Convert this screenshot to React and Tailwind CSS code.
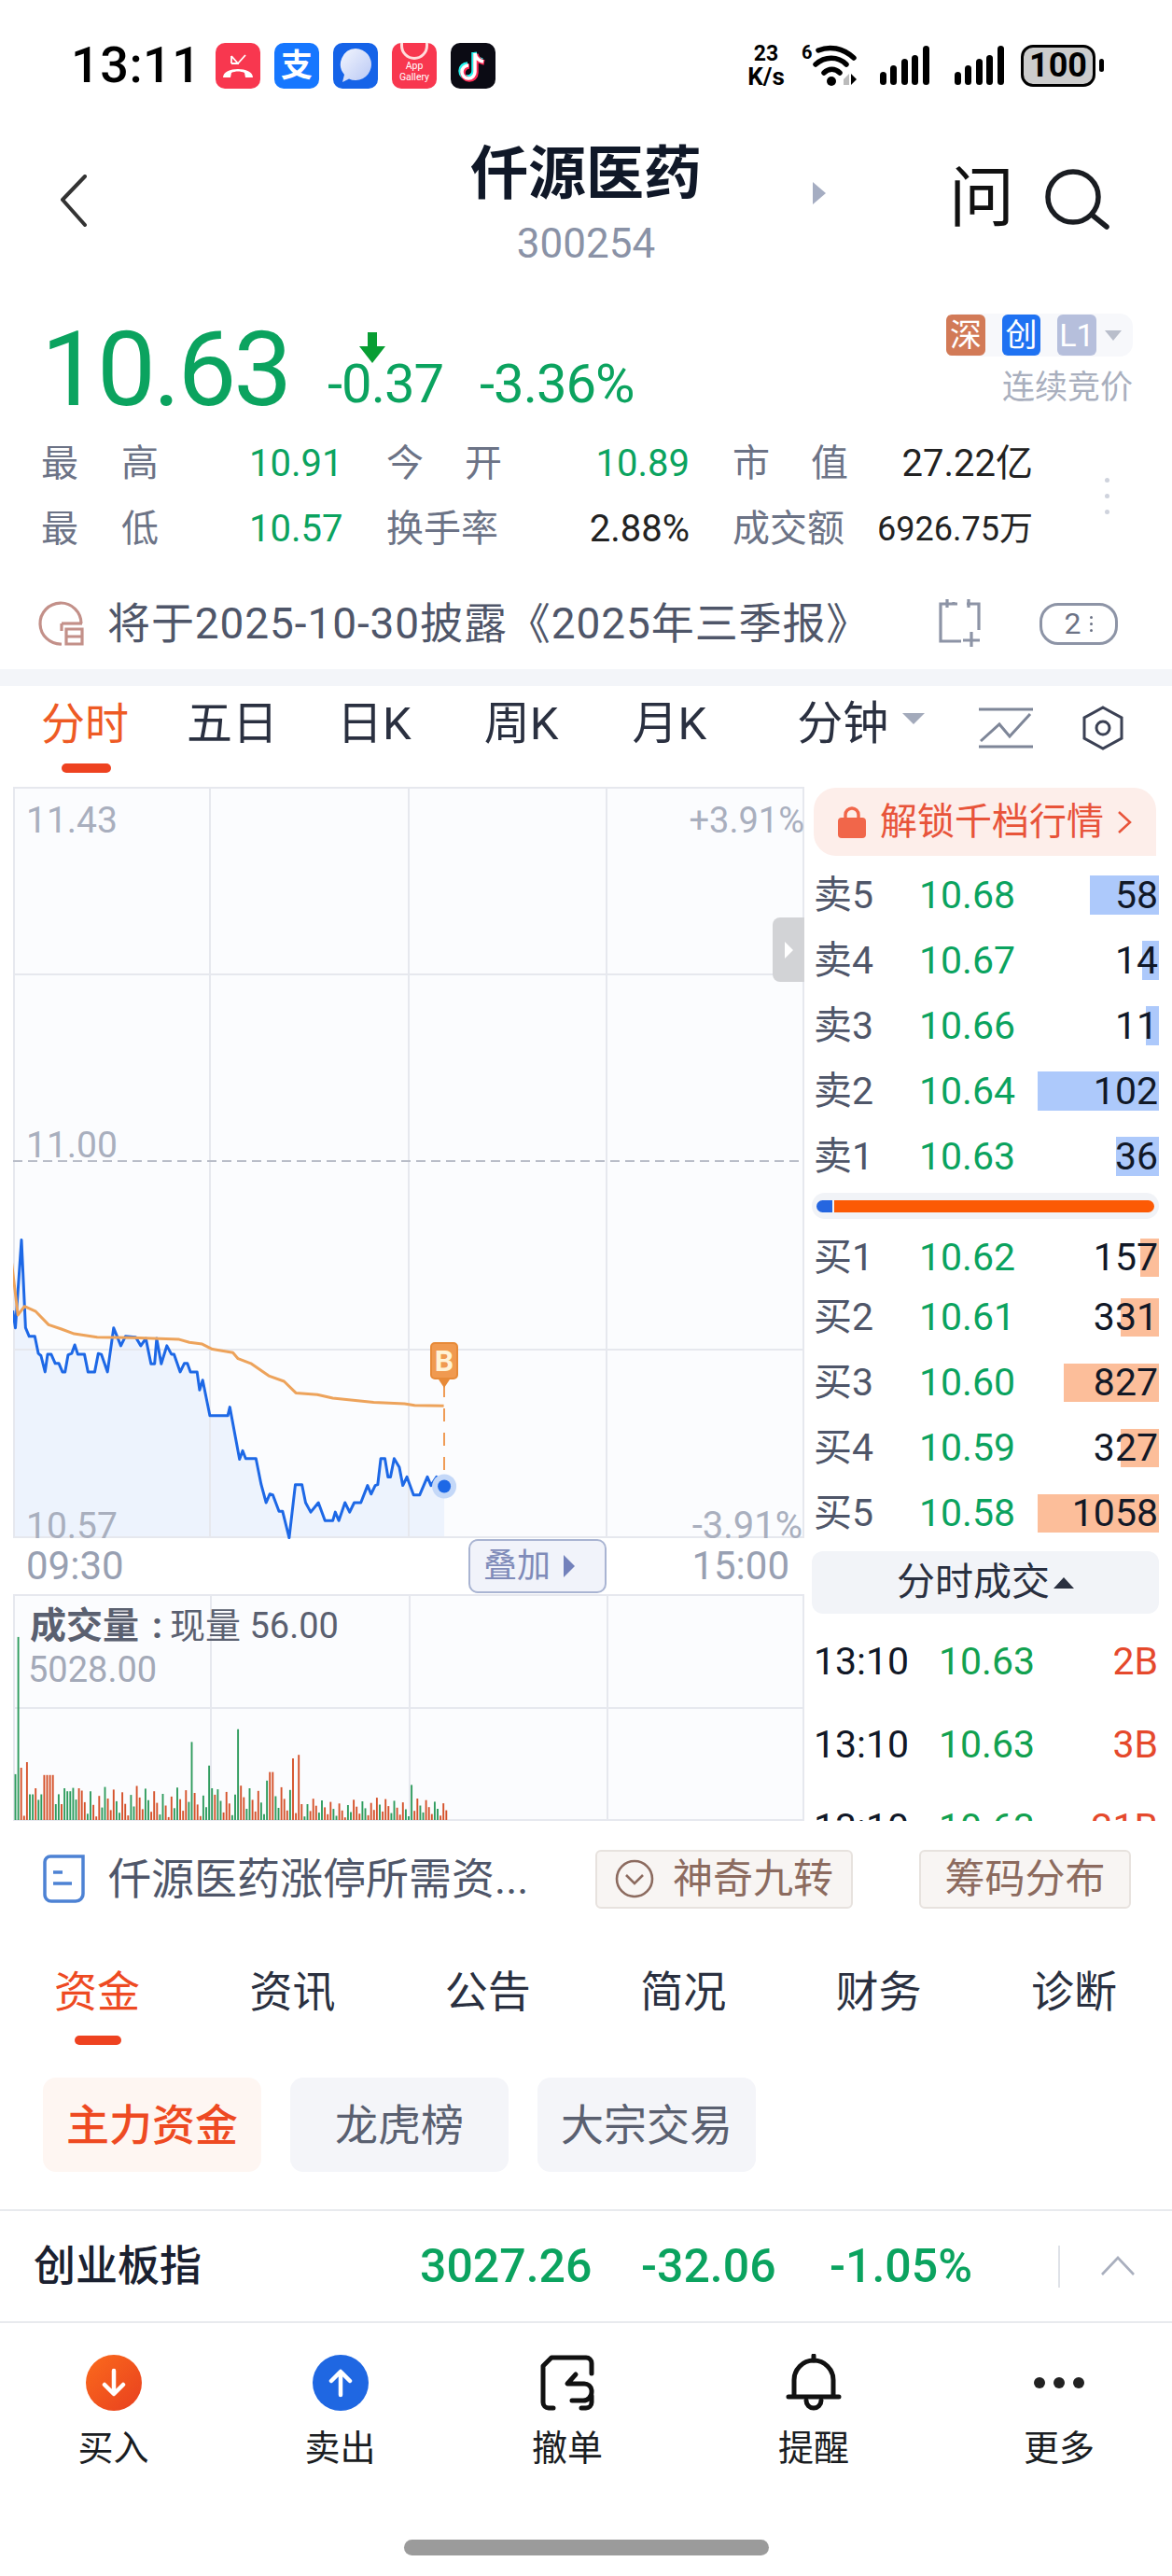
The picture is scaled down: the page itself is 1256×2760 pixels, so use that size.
import React from "react";

const SANS = { fontFamily: 'Roboto, "Noto Sans CJK SC", sans-serif' };
const GREEN = "#0ba35f";

const bluePts = [[25,360],[30,400],[42,195],[50,400],[57,420],[68,420],[75,460],[80,465],[88,503],[93,462],[100,462],[108,483],[115,483],[122,503],[127,503],[133,463],[140,460],[146,440],[152,462],[165,462],[172,503],[185,503],[192,460],[198,462],[210,503],[222,400],[236,442],[245,420],[265,422],[275,442],[285,425],[295,484],[302,484],[306,425],[315,484],[326,442],[335,462],[340,462],[352,503],[360,483],[366,483],[372,503],[385,503],[390,545],[396,522],[410,605],[445,605],[449,585],[468,707],[474,687],[480,705],[500,705],[510,765],[520,808],[527,788],[533,790],[545,828],[552,828],[565,890],[577,766],[590,766],[597,808],[607,830],[622,808],[635,850],[650,850],[655,830],[662,850],[674,808],[683,830],[692,808],[705,808],[718,768],[725,788],[733,768],[738,766],[744,705],[752,705],[758,748],[763,748],[770,705],[780,725],[787,768],[795,748],[808,790],[820,790],[835,748],[842,768],[853,748],[868,770]];
const orangePts = [[22,240],[35,370],[48,350],[70,362],[95,393],[120,403],[145,414],[190,422],[260,423],[350,427],[370,434],[395,438],[415,450],[455,458],[465,472],[490,483],[525,512],[555,525],[578,552],[620,556],[650,564],[730,574],[790,577],[810,581],[867,582]];
const conv = ([x, y]) => [(x / 1.823 - 14).toFixed(1), (y / 2.178 + 396).toFixed(1)];
const toStr = (pts) => pts.map(conv).map((p) => p.join(",")).join(" ");

const spikes = {37:[1125,"g"],30:[1445,"g"],44:[1430,"r"],50:[1417,"r"],58:[1492,"g"],63:[1492,"g"],70:[1478,"r"],75:[1505,"g"],82:[1492,"g"],89:[1447,"r"],95:[1447,"r"],101:[1447,"r"],108:[1515,"g"],120:[1515,"r"],127:[1478,"g"],133:[1485,"g"],139:[1485,"g"],152:[1478,"r"],179:[1485,"g"],377:[1370,"g"],408:[1425,"g"],416:[1478,"g"],422:[1493,"r"],466:[1340,"g"],530:[1440,"r"],524:[1460,"g"],575:[1408,"r"],581:[1400,"r"],735:[1500,"r"],805:[1470,"g"]};
const bars = [];
for (let i = 0; i < 150; i++) {
  const zx = 30 + i * 5.65;
  const key = Object.keys(spikes).find((k) => Math.abs(k - zx) < 2.9);
  let top, col;
  if (key) { top = spikes[key][0]; col = spikes[key][1]; }
  else {
    const r = (i * 7919 + 13) % 97;
    const limit = zx < 590 ? 75 : 45;
    top = 1552 - (6 + (r / 97) * limit);
    col = (i * 31) % 5 < 2 ? "g" : "r";
  }
  bars.push({ x: (zx / 1.823 - 14).toFixed(1), h: ((1552 - top) / 2.178).toFixed(1), col });
}

function AppIcons() {
  return (
    <div className="ml-[26px] flex gap-[15px]">
      <div className="flex h-[49px] w-[48px] items-center justify-center rounded-[10px] bg-[#f8374f]">
        <svg width="48" height="49" viewBox="0 0 48 49" fill="none" stroke="white" strokeWidth="1.8">
          <path d="M17 14v8h0M17 14l7 8 8-9M17 22h8" />
          <path d="M8 37c0-12 32-12 32 0h-8l-1-5c-4-2-10-2-14 0l-1 5z" fill="white" stroke="none" />
        </svg>
      </div>
      <div className="flex h-[49px] w-[48px] items-center justify-center rounded-[10px] bg-[#1677ff] text-[34px] font-bold leading-none text-white">支</div>
      <div className="flex h-[49px] w-[48px] items-center justify-center rounded-[10px] bg-[#1563e8]">
        <svg width="38" height="40" viewBox="0 0 38 40">
          <defs><linearGradient id="bub" x1="0" y1="0" x2="1" y2="1"><stop offset="0" stopColor="#f2f5fe" /><stop offset="1" stopColor="#b9c8f4" /></linearGradient></defs>
          <path d="M19 2a17 17 0 1 1-7 32.5l-7 3.5 2-8A17 17 0 0 1 19 2z" fill="url(#bub)" />
        </svg>
      </div>
      <div className="relative flex h-[49px] w-[48px] flex-col items-center justify-end overflow-hidden rounded-[10px] bg-[#f8374f] pb-[6px] text-[10.5px] leading-[12px] text-white" style={SANS}>
        <div className="absolute left-[9px] top-[-14px] h-[32px] w-[30px] rounded-full border-[3px] border-[#fdd]" />
        <span>App</span><span>Gallery</span>
      </div>
      <div className="flex h-[49px] w-[48px] items-center justify-center rounded-[10px] bg-[#0b0b14]">
        <svg width="36" height="40" viewBox="0 0 36 40" fill="none" strokeWidth="5.5">
          <path d="M20 7v20a7 7 0 1 1-7-7M20 7c1 5 4 8 9 9" stroke="#25f4ee" transform="translate(-1 -1)" />
          <path d="M20 7v20a7 7 0 1 1-7-7M20 7c1 5 4 8 9 9" stroke="#fe2c55" transform="translate(1 1)" />
          <path d="M20 7v20a7 7 0 1 1-7-7M20 7c1 5 4 8 9 9" stroke="#fff" strokeWidth="3.5" />
        </svg>
      </div>
    </div>
  );
}

function Signal() {
  return (
    <svg width="53" height="42" viewBox="0 0 53 42" fill="black">
      <rect x="0" y="28" width="7" height="14" rx="3.5" />
      <rect x="11" y="21" width="7" height="21" rx="3.5" />
      <rect x="23" y="14" width="7" height="28" rx="3.5" />
      <rect x="34" y="10" width="7" height="32" rx="3.5" />
      <rect x="46" y="0" width="7" height="42" rx="3.5" />
    </svg>
  );
}

function StatusBar() {
  return (
    <div className="flex h-[140px] items-center">
      <div className="ml-[76px] w-[129px] text-[54px] font-medium leading-none tracking-[0.5px] text-black" style={SANS}>13:11</div>
      <AppIcons />
      <div className="ml-[268px] flex w-[44px] flex-col items-center text-[23px] font-bold leading-[24px] text-black" style={SANS}>
        <span>23</span><span className="text-[26px]">K/s</span>
      </div>
      <svg className="ml-[16px]" width="60" height="46" viewBox="0 0 60 46" fill="none" stroke="black" strokeWidth="5.5" strokeLinecap="round">
        <text x="0" y="16" fontSize="20" fontWeight="700" fill="black" stroke="none" fontFamily="Roboto">6</text>
        <path d="M18 7c12-5 26-3 38 8" />
        <path d="M15 22c10-9 24-9 33 0" />
        <path d="M24 31c5-5 12-5 17 0" />
        <circle cx="32" cy="40" r="5" fill="black" stroke="none" />
        <path d="M45 38l6-6v12h-6z" fill="#bbb" stroke="none" />
        <path d="M53 32l6 6-6 6z" fill="black" stroke="none" />
      </svg>
      <div className="ml-[24px]"><Signal /></div>
      <div className="ml-[27px]"><Signal /></div>
      <div className="ml-[18px] flex h-[45px] w-[80px] items-center justify-center rounded-[13px] border-[3px] border-black bg-[#cccccc] text-[36px] font-bold leading-none text-black" style={SANS}>100</div>
      <div className="ml-[4px] h-[14px] w-[5px] rounded-full bg-black" />
    </div>
  );
}

function Header() {
  return (
    <div className="grid h-[190px] grid-cols-[503px_250px_1fr]">
      <div className="pl-[64px] pt-[47px]">
        <svg width="30" height="56" viewBox="0 0 30 56" fill="none" stroke="#333" strokeWidth="4" strokeLinecap="round" strokeLinejoin="round"><path d="M27 2L3 27l24 27" /></svg>
      </div>
      <div className="flex flex-col items-center">
        <div className="mt-[12px] whitespace-nowrap text-[62px] font-bold leading-[70px] text-[#101828]" style={SANS}>仟源医药</div>
        <div className="mt-[14px] text-[44px] leading-[50px] text-[#8a92a6]" style={SANS}>300254</div>
      </div>
      <div className="flex items-start">
        <div className="ml-[118px] mt-[55px] h-0 w-0 border-y-[12px] border-l-[14px] border-y-transparent border-l-[#a5adc2]" />
        <div className="ml-[132px] mt-[34px] text-[70px] font-normal leading-[78px] text-[#111]" style={SANS}>问</div>
        <svg className="ml-[32px] mt-[41px]" width="70" height="66" viewBox="0 0 70 66" fill="none" stroke="#1a1d22" strokeWidth="5.5" strokeLinecap="round"><circle cx="31" cy="30" r="27" /><path d="M51 49l16 13" /></svg>
      </div>
    </div>
  );
}

function PriceBlock() {
  return (
    <div className="flex h-[120px] items-start">
      <div className="ml-[44px] mt-[10px] w-[264px] text-[112px] font-normal leading-[112px] tracking-[-3px]" style={{ ...SANS, color: GREEN }}>10.63</div>
      <div className="relative ml-[43px] mt-[51px] w-[123px] text-[58px] leading-[60px] tracking-[-1px]" style={{ ...SANS, color: GREEN }}>
        <svg className="absolute left-[33px] top-[-25px]" width="30" height="34" viewBox="0 0 30 34" fill="#089e33"><path d="M10 0h10v15h9L15 33 1 15h9z" /></svg>
        -0.37
      </div>
      <div className="ml-[40px] mt-[51px] w-[170px] text-[58px] leading-[60px] tracking-[-1px]" style={{ ...SANS, color: GREEN }}>-3.36%</div>
      <div className="ml-[330px] flex w-[200px] flex-col items-start">
        <div className="mt-[6px] flex h-[46px] w-[200px] items-center rounded-[14px] bg-[#f7f8fb] text-[34px] leading-none text-white" style={SANS}>
          <span className="flex h-[44px] w-[42px] items-center justify-center rounded-[6px] bg-[#d27a57]">深</span>
          <span className="ml-[18px] flex h-[44px] w-[41px] items-center justify-center rounded-[6px] bg-[#1f72f2]">创</span>
          <span className="ml-[18px] flex h-[44px] w-[42px] items-center justify-center rounded-[6px] bg-[#b6bfdc]">L1</span>
          <span className="ml-[9px] h-0 w-0 border-x-[9px] border-t-[11px] border-x-transparent border-t-[#b9becb]" />
        </div>
        <div className="ml-[60px] mt-[12px] whitespace-nowrap text-[35px] leading-[44px] text-[#a9afbe]" style={SANS}>连续竞价</div>
      </div>
    </div>
  );
}

function Lbl({ a, b, w = "w-[124px]" }) {
  return <div className={`flex ${w} justify-between text-[#6c7386]`}><span>{a}</span>{b && <span>{b}</span>}</div>;
}

function Stats() {
  return (
    <div className="relative pl-[44px] text-[40px] leading-[70px]" style={SANS}>
      <div className="flex h-[70px]">
        <Lbl a="最" b="高" w="w-[126px]" />
        <div className="ml-[97px] w-[147px]" style={{ color: GREEN }}>10.91</div>
        <Lbl a="今" b="开" />
        <div className="w-[201px] text-right" style={{ color: GREEN }}>10.89</div>
        <Lbl a="市" b="值" w="ml-[46px] w-[124px]" />
        <div className="w-[198px] text-right text-[#222]">27.22亿</div>
      </div>
      <div className="flex h-[70px]">
        <Lbl a="最" b="低" w="w-[126px]" />
        <div className="ml-[97px] w-[147px]" style={{ color: GREEN }}>10.57</div>
        <Lbl a="换手率" />
        <div className="w-[201px] text-right text-[#222]">2.88%</div>
        <Lbl a="成交额" w="ml-[46px] w-[124px]" />
        <div className="w-[198px] text-right text-[36px] text-[#222]">6926.75万</div>
      </div>
      <div className="absolute left-[1184px] top-[50px] flex flex-col gap-[12px]">
        <i className="h-[5px] w-[5px] rounded-full bg-[#cfd3dd]" />
        <i className="h-[5px] w-[5px] rounded-full bg-[#cfd3dd]" />
        <i className="h-[5px] w-[5px] rounded-full bg-[#cfd3dd]" />
      </div>
    </div>
  );
}

function Notice() {
  return (
    <div className="mt-[36px] flex h-[60px] items-center pl-[40px]" style={SANS}>
      <svg width="52" height="52" viewBox="0 0 52 52" fill="none" stroke="#c39089" strokeWidth="3.2">
        <path d="M47 26A22 22 0 1 0 26 48" />
        <path d="M26 26h22" />
        <path d="M26 26v8M31 32h17v16H31zM31 40h17" />
      </svg>
      <div className="ml-[23px] w-[885px] whitespace-nowrap text-[46px] leading-none tracking-[0.9px] text-[#4f5669]">将于2025-10-30披露《2025年三季报》</div>
      <svg width="54" height="54" viewBox="0 0 54 54" fill="none" stroke="#8d94a6" strokeWidth="3.2">
        <path d="M26 6H8v40h22M36 6h13v28" />
        <path d="M15 1v9M38 1v9M22 4v3" />
        <path d="M41 36v16M32 45h18" />
      </svg>
      <div className="ml-[60px] flex h-[45px] w-[84px] items-center justify-center gap-[10px] rounded-[20px] border-[3px] border-[#8d94a6] text-[32px] leading-none text-[#6c7386]">
        <span>2</span>
        <span className="flex flex-col gap-[4px]">
          <i className="h-[3px] w-[3px] rounded-full bg-[#6c7386]" />
          <i className="h-[3px] w-[3px] rounded-full bg-[#6c7386]" />
          <i className="h-[3px] w-[3px] rounded-full bg-[#6c7386]" />
        </span>
      </div>
    </div>
  );
}

function ChartTabs() {
  return (
    <div className="relative flex h-[108px] items-start text-[49px] leading-[60px] text-[#2a3040]" style={SANS}>
      <span className="ml-[44px] mt-[11px] w-[94px] text-[47px] text-[#ee5a24]">分时</span>
      <span className="ml-[62px] mt-[11px]">五日</span>
      <span className="ml-[63px] mt-[11px]">日K</span>
      <span className="ml-[78px] mt-[11px]">周K</span>
      <span className="ml-[79px] mt-[11px]">月K</span>
      <span className="ml-[97px] mt-[11px]">分钟</span>
      <span className="ml-[15px] mt-[29px] h-0 w-0 border-x-[12px] border-t-[12px] border-x-transparent border-t-[#a3aabb]" />
      <svg className="ml-[58px] mt-[23px]" width="58" height="44" viewBox="0 0 58 44" fill="none" stroke="#7e8698" strokeWidth="3">
        <path d="M0 2h58M0 42h58" />
        <path d="M2 36l20-18 11 13 22-24" />
      </svg>
      <svg className="ml-[51px] mt-[21px]" width="48" height="48" viewBox="0 0 48 48" fill="none" stroke="#3b4154" strokeWidth="3"><path d="M24 2l20 11v22L24 46 4 35V13z" /><circle cx="24" cy="24" r="7" /></svg>
      <i className="absolute left-[66px] top-[83px] h-[10px] w-[53px] rounded-full bg-[#ee4220]" />
    </div>
  );
}

function PriceChart() {
  const W = 848, H = 804;
  const blue = bluePts.map(conv);
  const last = blue[blue.length - 1];
  const fillPath = `${blue[0][0]},${H} ${blue.map((p) => p.join(",")).join(" ")} ${last[0]},${H}`;
  return (
    <div className="relative h-[804px] w-[848px] bg-[#fbfcfe]" style={SANS}>
      <svg className="absolute inset-0" width={W} height={H + 2} viewBox={`0 0 ${W} ${H + 2}`} fill="none">
        <polygon points={fillPath} fill="#edf3fd" />
        <g stroke="#e6e8ee" strokeWidth="2">
          <path d={`M1 0V${H}M211 0V${H}M424 0V${H}M636 0V${H}M847 0V${H}M0 1H${W}M0 201H${W}M0 603H${W}M0 ${H}H${W}`} />
        </g>
        <path d={`M0 401H${W}`} stroke="#b9bdc8" strokeWidth="2" strokeDasharray="10 6" />
        <polyline points={toStr(bluePts)} stroke="#1d68e6" strokeWidth="3" strokeLinejoin="round" />
        <polyline points={toStr(orangePts)} stroke="#eda35b" strokeWidth="3" strokeLinejoin="round" />
        <path d="M462 640V745" stroke="#ef9c56" strokeWidth="2" strokeDasharray="14 12" />
        <circle cx={last[0]} cy={last[1]} r="13" fill="#c4d8f8" />
        <circle cx={last[0]} cy={last[1]} r="7" fill="#1d68e6" />
      </svg>
      <div className="absolute left-[14px] top-[14px] text-[39px] leading-[44px] text-[#a9afbe]">11.43</div>
      <div className="absolute right-0 top-[14px] text-[38px] leading-[44px] text-[#a9afbe]">+3.91%</div>
      <div className="absolute left-[14px] top-[362px] text-[39px] leading-[44px] text-[#a9afbe]">11.00</div>
      <div className="absolute left-[14px] top-[770px] text-[39px] leading-[44px] text-[#a9afbe]">10.57</div>
      <div className="absolute right-[2px] top-[770px] text-[40px] leading-[44px] text-[#a9afbe]">-3.91%</div>
      <div className="absolute left-[814px] top-[140px] flex h-[69px] w-[34px] items-center justify-center rounded-l-[8px] bg-[#d2d3d6]">
        <span className="h-0 w-0 border-y-[9px] border-l-[9px] border-y-transparent border-l-white" />
      </div>
      <div className="absolute left-[447px] top-[595px] flex h-[40px] w-[30px] items-center justify-center rounded-[5px] border-[2px] border-[#e78a38] bg-[#f09a50] text-[32px] font-bold leading-none text-[#fff3d6]">B</div>
      <div className="absolute left-[456px] top-[635px] h-0 w-0 border-x-[6px] border-t-[9px] border-x-transparent border-t-[#e78a38]" />
    </div>
  );
}

function VolumeChart() {
  const W = 848, H = 243;
  return (
    <div className="relative h-[243px] w-[848px] bg-[#fbfcfe]" style={SANS}>
      <svg className="absolute inset-0" width={W} height={H} viewBox={`0 0 ${W} ${H}`} fill="none">
        <path d={`M1 0V${H}M212 0V${H}M425 0V${H}M637 0V${H}M847 0V${H}M0 1H${W}M0 122H${W}M0 ${H - 1}H${W}`} stroke="#e6e8ee" strokeWidth="2" />
        {bars.map((b, i) => (
          <line key={i} x1={b.x} x2={b.x} y1={H - 1} y2={H - 1 - b.h} stroke={b.col === "g" ? "#2f9c5e" : "#d5522b"} strokeWidth="1.9" />
        ))}
      </svg>
      <div className="absolute left-[18px] top-[11px] flex whitespace-nowrap text-[39px] leading-[46px] text-[#5a6070]">
        <span className="font-bold">成交量</span>
        <span className="ml-[14px] font-bold">:</span>
        <span className="ml-[8px] text-[38px]">现量 56.00</span>
      </div>
      <div className="absolute left-[16px] top-[58px] text-[38px] leading-[46px] text-[#a3a9b8]">5028.00</div>
    </div>
  );
}

function Book({ name, price, qty, width, color, h = "h-[42px]", mt }) {
  return (
    <div className={`relative flex ${h} ${mt} shrink-0 items-center text-[41px] leading-none`} style={SANS}>
      <span className="ml-[2px] w-[113px] whitespace-nowrap text-[#4f5669]">{name}</span>
      <span style={{ color: GREEN }}>{price}</span>
      <i className="absolute bottom-0 right-0 top-0" style={{ width, background: color }} />
      <span className="relative ml-auto mr-[1px] text-[#111827]">{qty}</span>
    </div>
  );
}

function OrderBook() {
  const SELL = "#adc9fb", BUY = "#fcbe9a";
  return (
    <div className="ml-[8px] flex h-[1108px] w-[372px] flex-col overflow-hidden" style={SANS}>
      <div className="ml-[2px] mt-[1px] flex h-[73px] w-[367px] shrink-0 items-center rounded-t-[24px] rounded-bl-[24px] bg-[#fdeeea] pl-[26px] text-[40px] leading-none text-[#e8543a]">
        <svg width="30" height="34" viewBox="0 0 30 34"><path d="M8 14V9a7 7 0 0 1 14 0v5" fill="none" stroke="#f1664a" strokeWidth="3.4" /><rect x="0" y="12" width="30" height="22" rx="4" fill="#f1664a" /></svg>
        <span className="ml-[15px] whitespace-nowrap">解锁千档行情</span>
        <svg className="ml-[14px]" width="16" height="26" viewBox="0 0 16 26" fill="none" stroke="#e8543a" strokeWidth="2.5"><path d="M2 2l12 11L2 24" /></svg>
      </div>
      <Book name="卖5" price="10.68" qty="58" width="74px" color={SELL} mt="mt-[21px]" />
      <Book name="卖4" price="10.67" qty="14" width="18px" color={SELL} mt="mt-[28px]" />
      <Book name="卖3" price="10.66" qty="11" width="14px" color={SELL} mt="mt-[28px]" />
      <Book name="卖2" price="10.64" qty="102" width="130px" color={SELL} mt="mt-[28px]" />
      <Book name="卖1" price="10.63" qty="36" width="46px" color={SELL} mt="mt-[28px]" />
      <div className="mt-[18px] flex h-[28px] shrink-0 items-center rounded-full bg-[#f1f3f7] px-[5px]">
        <div className="flex h-[13px] w-full overflow-hidden rounded-full">
          <div className="h-full w-[17px] bg-[#2566e0]" />
          <div className="ml-[2px] h-full flex-1 bg-[#fc5a05]" />
        </div>
      </div>
      <Book name="买1" price="10.62" qty="157" width="20px" color={BUY} mt="mt-[21px]" h="h-[41px]" />
      <Book name="买2" price="10.61" qty="331" width="41px" color={BUY} mt="mt-[23px]" h="h-[41px]" />
      <Book name="买3" price="10.60" qty="827" width="102px" color={BUY} mt="mt-[29px]" h="h-[41px]" />
      <Book name="买4" price="10.59" qty="327" width="41px" color={BUY} mt="mt-[29px]" h="h-[41px]" />
      <Book name="买5" price="10.58" qty="1058" width="130px" color={BUY} mt="mt-[29px]" h="h-[41px]" />
      <div className="mt-[20px] flex h-[67px] shrink-0 items-center justify-center rounded-[12px] bg-[#f2f4f8] text-[41px] leading-none text-[#2a3040]">
        <span className="whitespace-nowrap">分时成交</span>
        <span className="ml-[4px] h-0 w-0 border-x-[11px] border-b-[12px] border-x-transparent border-b-[#2a3040]" />
      </div>
      <div className="mt-[7px] flex-1 overflow-hidden">
        {[["2B"], ["3B"], ["21B"]].map(([v], i) => (
          <div key={i} className="flex h-[89px] items-center text-[41px] leading-none">
            <span className="ml-[2px] w-[134px] text-[#111827]">13:10</span>
            <span className="text-[#12a150]">10.63</span>
            <span className="ml-auto mr-[1px] text-[#e5492c]">{v}</span>
          </div>
        ))}
      </div>
    </div>
  );
}

function ChartArea() {
  return (
    <div className="flex pl-[14px]">
      <div className="flex w-[848px] flex-col">
        <PriceChart />
        <div className="relative flex h-[61px] items-center justify-between px-[14px] pr-[16px] text-[42px] text-[#98a0b2]" style={SANS}>
          <span>09:30</span>
          <span>15:00</span>
          <div className="absolute left-[488px] top-[2px] flex h-[58px] w-[148px] items-center rounded-[10px] border-[2px] border-[#a9b4d2] bg-[#f1f3fa] pl-[14px] text-[36px] leading-none text-[#7f8bb9]">
            叠加
            <span className="ml-[14px] h-0 w-0 border-y-[12px] border-l-[12px] border-y-transparent border-l-[#7381bb]" />
          </div>
        </div>
        <VolumeChart />
      </div>
      <OrderBook />
    </div>
  );
}

function NewsRow() {
  const chip = "flex h-[63px] items-center justify-center rounded-[6px] border-[2px] border-[#e7e2de] bg-[#f8f5f3] text-[43px] leading-none text-[#8c6b5f]";
  return (
    <div className="flex h-[124px] items-center pl-[46px]" style={SANS}>
      <svg width="46" height="52" viewBox="0 0 46 52" fill="none" stroke="#4d82d4" strokeWidth="3.5">
        <path d="M8 2h35v40a8 8 0 0 1-8 8H9a7 7 0 0 1-7-7V8a6 6 0 0 1 6-6z" />
        <path d="M11 19h10M11 31h20" />
      </svg>
      <div className="ml-[24px] w-[522px] whitespace-nowrap text-[46px] leading-none text-[#4f5669]">仟源医药涨停所需资...</div>
      <div className={`${chip} w-[276px] gap-[20px]`}>
        <svg width="42" height="42" viewBox="0 0 42 42" fill="none" stroke="#8c6b5f" strokeWidth="2.6"><circle cx="21" cy="21" r="19" /><path d="M12 17l9 9 9-9" /></svg>
        <span className="whitespace-nowrap">神奇九转</span>
      </div>
      <div className={`${chip} ml-[71px] w-[227px]`}><span className="whitespace-nowrap">筹码分布</span></div>
    </div>
  );
}

function InfoTabs() {
  const labels = ["资金", "资讯", "公告", "简况", "财务", "诊断"];
  return (
    <div className="relative flex h-[151px] pl-[58px] text-[46px] leading-[60px] text-[#2a3040]" style={SANS}>
      {labels.map((l, i) => (
        <span key={l} className={`mt-[29px] w-[209.4px] shrink-0 ${i === 0 ? "text-[#ee4a22]" : ""}`}>{l}</span>
      ))}
      <i className="absolute left-[80px] top-[106px] h-[10px] w-[50px] rounded-full bg-[#ee4220]" />
    </div>
  );
}

function SubTabs() {
  const base = "flex h-[101px] w-[234px] items-center justify-center rounded-[14px] text-[46px] leading-none";
  return (
    <div className="flex h-[141px] items-start pl-[46px]" style={SANS}>
      <div className={`${base} bg-[#fef6f2] font-medium text-[#ee4a22]`}>主力资金</div>
      <div className={`${base} ml-[31px] bg-[#f4f5f9] text-[#5a6070]`}>龙虎榜</div>
      <div className={`${base} ml-[31px] bg-[#f4f5f9] text-[#5a6070]`}>大宗交易</div>
    </div>
  );
}

function IndexRow() {
  const num = "text-[50px] font-medium leading-none";
  return (
    <div className="flex h-[122px] items-center border-y-[2px] border-[#e8eaee]" style={SANS}>
      <div className="ml-[36px] w-[414px] text-[45px] font-medium leading-none text-[#1a2030]">创业板指</div>
      <div className={`${num} w-[237px]`} style={{ color: GREEN }}>3027.26</div>
      <div className={`${num} w-[202px]`} style={{ color: GREEN }}>-32.06</div>
      <div className={`${num} w-[245px]`} style={{ color: GREEN }}>-1.05%</div>
      <i className="h-[45px] w-[2px] bg-[#dfe2e8]" />
      <svg className="ml-[43px]" width="38" height="22" viewBox="0 0 38 22" fill="none" stroke="#a9afbe" strokeWidth="2.6"><path d="M2 20L19 2l17 18" /></svg>
    </div>
  );
}

function BottomNav() {
  const items = [
    ["买入", (
      <svg width="62" height="62" viewBox="0 0 62 62"><defs><linearGradient id="bu" x1="0" y1="0" x2="1" y2="1"><stop offset="0" stopColor="#fb6a1c" /><stop offset="1" stopColor="#e8401f" /></linearGradient></defs><circle cx="31" cy="31" r="30" fill="url(#bu)" /><path d="M31 18v24M21 33l10 10 10-10" fill="none" stroke="white" strokeWidth="4.5" strokeLinecap="round" strokeLinejoin="round" /></svg>
    )],
    ["卖出", (
      <svg width="62" height="62" viewBox="0 0 62 62"><circle cx="31" cy="31" r="30" fill="#1f67e2" /><path d="M31 44V20M21 29l10-10 10 10" fill="none" stroke="white" strokeWidth="4.5" strokeLinecap="round" strokeLinejoin="round" /></svg>
    )],
    ["撤单", (
      <svg width="58" height="60" viewBox="0 0 58 60" fill="none" stroke="#111" strokeWidth="5" strokeLinecap="round" strokeLinejoin="round"><path d="M14 57H9a6 6 0 0 1-6-6V12l9-9h37a6 6 0 0 1 6 6v11M55 44v7a6 6 0 0 1-6 6h-5" /><path d="M38 21L29 31h18a8 8 0 0 1 8 7v2a9 9 0 0 1-9 9H34" /></svg>
    )],
    ["提醒", (
      <svg width="60" height="62" viewBox="0 0 60 62" fill="none" stroke="#111" strokeWidth="5" strokeLinecap="round" strokeLinejoin="round"><path d="M3 46h54M9 46V28a21 21 0 0 1 42 0v18" /><path d="M30 2v5" /><path d="M22 50a8 8 0 0 0 16 0" /></svg>
    )],
    ["更多", (
      <svg width="56" height="62" viewBox="0 0 56 62" fill="#222"><circle cx="7" cy="31" r="6" /><circle cx="28" cy="31" r="6" /><circle cx="49" cy="31" r="6" /></svg>
    )],
  ];
  const widths = ["w-[243px]", "w-[243px]", "w-[244px]", "w-[284px]", "w-[242px]"];
  return (
    <div className="flex pt-[33px]" style={SANS}>
      {items.map(([l, icon], i) => (
        <div key={l} className={`flex ${widths[i]} flex-col items-center`}>
          <div className="flex h-[62px] items-center">{icon}</div>
          <div className="mt-[17px] text-[38px] leading-[44px] text-[#1a1d22]">{l}</div>
        </div>
      ))}
    </div>
  );
}

export default function App() {
  return (
    <div className="relative h-[2760px] w-[1256px] overflow-hidden bg-white" style={SANS}>
      <StatusBar />
      <Header />
      <PriceBlock />
      <div className="pt-[12px]"><Stats /></div>
      <Notice />
      <div className="mt-[19px] h-[18px] bg-[#f3f5f9]" />
      <ChartTabs />
      <ChartArea />
      <NewsRow />
      <InfoTabs />
      <SubTabs />
      <IndexRow />
      <BottomNav />
      <div className="mt-[76px] flex justify-center"><i className="h-[17px] w-[391px] rounded-full bg-[#9b9b9b]" /></div>
    </div>
  );
}
